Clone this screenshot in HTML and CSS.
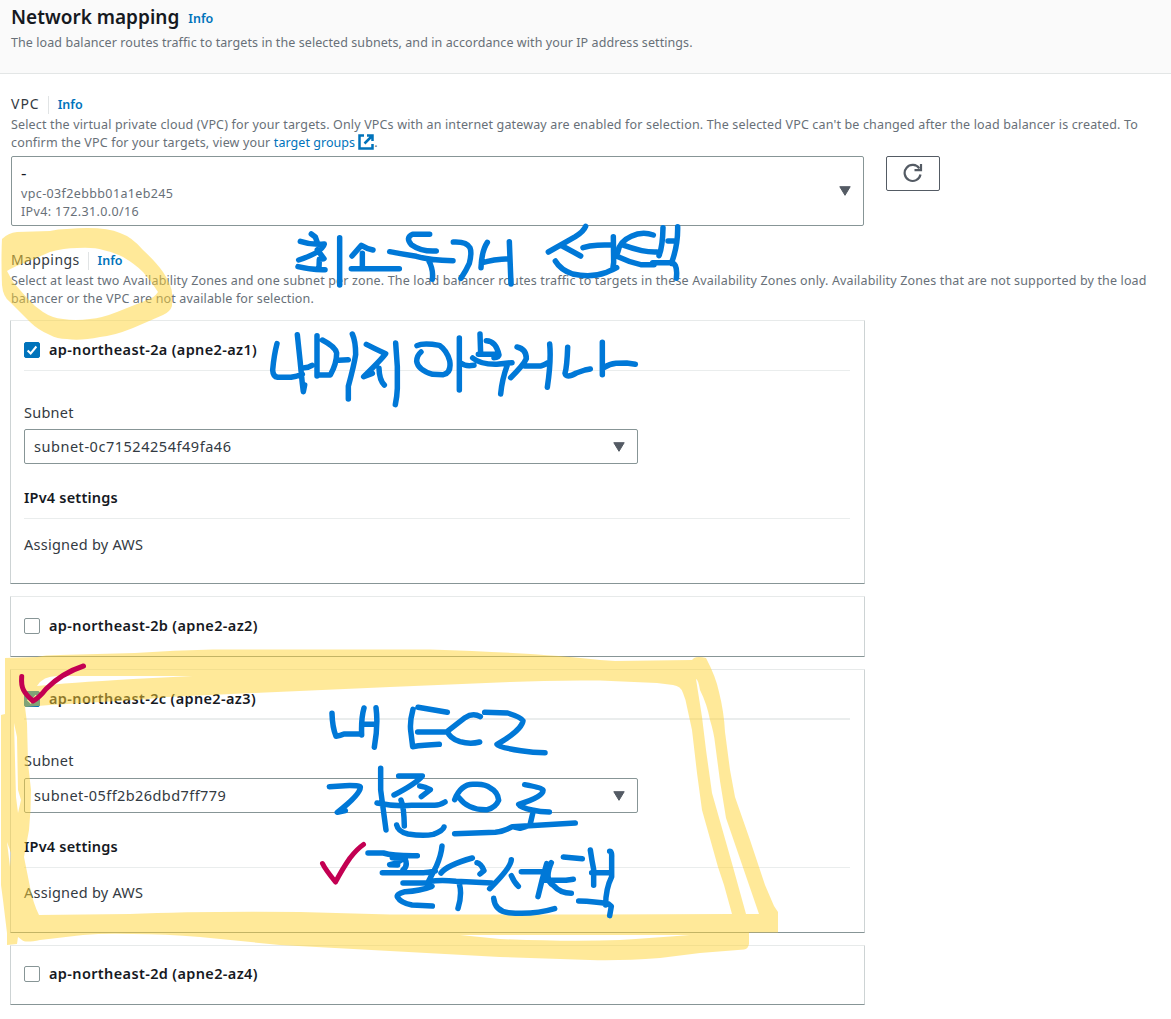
FILE: index.html
```
<!DOCTYPE html>
<html lang="en">
<head>
<meta charset="utf-8">
<title>Network mapping</title>
<link rel="stylesheet" href="styles.css">
</head>
<body>
<main class="page">
  <header class="header">
    <div class="title-row"><h1 class="title">Network mapping</h1><a class="info">Info</a></div>
    <p class="hint hint-header">The load balancer routes traffic to targets in the selected subnets, and in accordance with your IP address settings.</p>
  </header>

  <section class="vpc">
    <div class="label-row"><span class="label vpc-label">VPC</span><a class="info info-divided">Info</a></div>
    <p class="hint"><span class="hint-line">Select the virtual private cloud (VPC) for your targets. Only VPCs with an internet gateway are enabled for selection. The selected VPC can't be changed after the load balancer is created. To</span><span class="hint-line">confirm the VPC for your targets, view your <a class="link">target groups</a><svg class="external" viewBox="0 0 16 16"><path d="M6 1.500H1.500v13h13V10M9 1.500h5.500V7M14 2 6.500 9.500"/></svg>.</span></p>
    <div class="vpc-row">
      <div class="vpc-select">
        <div class="vpc-value"><span class="dash">-</span><span>vpc-03f2ebbb01a1eb245</span><span>IPv4: 172.31.0.0/16</span></div>
        <svg class="caret" viewBox="0 0 12 10"><path d="M.8.7h10.400L6 9.300z"/></svg>
      </div>
      <button class="refresh"><svg viewBox="0 0 20 20"><path d="M17.500 11.500A8 8 0 1 1 16.300 5.500"/><path d="M18 1v6.200h-6.500"/></svg></button>
    </div>
  </section>

  <section class="mappings">
    <div class="label-row"><span class="label mappings-label">Mappings</span><a class="info info-divided">Info</a></div>
    <p class="hint map-hint"><span class="hint-line">Select at least two Availability Zones and one subnet per zone. The load balancer routes traffic to targets in these Availability Zones only. Availability Zones that are not supported by the load</span><span class="hint-line">balancer or the VPC are not available for selection.</span></p>

    <div class="cards">
      <article class="card open">
        <div class="zone"><span class="checkbox checked"><svg viewBox="0 0 16 16"><path d="M3 8.500 6.500 12 13 4"/></svg></span><b>ap-northeast-2a (apne2-az1)</b></div>
        <div class="subnet-label">Subnet</div>
        <div class="subnet-select"><span>subnet-0c71524254f49fa46</span><svg class="caret" viewBox="0 0 12 10"><path d="M.8.7h10.400L6 9.300z"/></svg></div>
        <div class="settings">IPv4 settings</div>
        <div class="assigned">Assigned by AWS</div>
      </article>
      <article class="card"><div class="zone"><span class="checkbox"></span><b>ap-northeast-2b (apne2-az2)</b></div></article>
      <article class="card open third">
        <div class="zone"><span class="checkbox checked"><svg viewBox="0 0 16 16"><path d="M3 8.500 6.500 12 13 4"/></svg></span><b>ap-northeast-2c (apne2-az3)</b></div>
        <div class="subnet-label">Subnet</div>
        <div class="subnet-select"><span>subnet-05ff2b26dbd7ff779</span><svg class="caret" viewBox="0 0 12 10"><path d="M.8.7h10.400L6 9.300z"/></svg></div>
        <div class="settings">IPv4 settings</div>
        <div class="assigned">Assigned by AWS</div>
      </article>
      <article class="card last"><div class="zone"><span class="checkbox"></span><b>ap-northeast-2d (apne2-az4)</b></div></article>
    </div>
  </section>

  <svg class="ink" viewBox="0 0 1171 1019">
    <g class="marker">
      <path d="M2 239Q8 233 17 232L50 231Q58 229 67 229Q104 226 120 233Q132 237 143 250Q156 262 163 272Q173 287 172 296V306Q170 312 163 315L133 328Q113 336 100 337Q80 341 67 339Q57 339 50 335Q38 330 30 322L10 302Q3 297 2 285Q1 260 2 239ZM7 271Q15 266 27 262L50 252Q64 248 77 248Q94 247 103 250Q114 252 123 257Q135 264 143 272Q152 282 158 292Q154 298 147 300L117 312Q102 318 90 319Q75 321 63 319Q52 318 43 312Q34 306 27 298L13 282Z"/>
      <path d="M5 658L37 657Q44 655 60 655L135 653Q175 650 213 649.500H430Q540 653 600 660L615 661L692 660L694 658Q698 656 706 658Q716 677 719 692Q724 712 725 732L730 770L735 797L750 840L765 885L774 906L778 912V932.500H749V944Q748 949 744 949.500L700 953L660 958Q620 961 590 960L500 957L390 951L280 945L200 937Q165 934 133 934Q105 933 83 935L40 940Q25 943 22 940L18 937L17 944L7 945V933L3 900L1 885V715L5 714ZM25 707L50 705L93 702.500Q140 700 167 697L253 693L390 687L510 682Q550 680 600 680.500L657 683L673 685Q681 686 683 693Q686 700 687 707L692 730L697 773L702 810L718 867L724 885L732 914L600 914.500H390L300 912Q200 911 130 914L39 915Q33 903 30 887L24 857L29 830Q31 810 31 790L28 763L27 723ZM37 686Q43 676 57 676H193L133 679Q67 683 37 686ZM14 723L17 737L18 790L21 800L18 813L16 797ZM7 842L11 853L10 867ZM696 679Q698 679 700 690Q707 704 710 720Q714 733 715 743L720 781L726 818L759 914H746L733 867L712 793L706 750L702 717ZM460 935H690Q650 938 620 940Q570 942 500 939Z"/>
    </g>
    <g class="pen">
      <g transform="translate(280 220) scale(.33333)"><path d="M94 42 106 51 112 68M61 64Q96 76 133 72Q128 96 56 120M112 89Q121 102 132 116L118 118 117 142M54 140Q92 150 135 149M179 53V195M216 108 244 76Q260 86 279 90M247 100V145M214 146H358M449 43H398Q375 53 394 74Q425 96 469 93M329 95Q370 103 409 109Q449 121 519 122M445 120Q461 148 457 178M520 66Q560 64 570 83Q576 98 568 130Q559 150 543 175"/></g>
      <g transform="translate(480 215) scale(.33333)"><path d="M22 82Q5 107 3 158M4 144Q40 132 88 131M88 80 93 207M317 34Q311 50 286 65L205 111M247 93 302 123M309 98Q328 92 352 91L396 89M400 65 401 142 399 157M226 138Q242 165 278 177Q333 189 377 173 401 163 410 158M520 60Q486 48 454 64 417 80 413 113M425 89Q459 101 485 107 509 112 531 111M411 124Q446 141 482 149L522 149M549 38Q548 95 537 122M593 35Q594 93 574 145M564 78 581 78M518 143H566Q595 138 589 190"/></g>
      <g transform="translate(260 320) scale(.33333)"><path d="M51 71Q42 105 38 150 39 170 53 172H93Q111 169 127 162M112 44 120 120 127 191 130 215 134 195M133 143Q145 143 156 136M171 47V168M187 60Q226 80 230 99 230 131 211 165H174M236 121 265 119M277 42Q287 64 287 104 282 136 265 199V237M319 73Q338 83 377 101 364 119 311 170L337 160M357 145Q358 180 373 195M407 69 412 140V205Q411 231 406 254"/></g>
      <g transform="translate(410 325) scale(.33333)"><path d="M21 62Q40 52 88 61 110 76 119 107 125 143 100 149L68 148Q24 135 20 109 20 92 33 81M148 39V195M154 115Q165 125 192 121M210 27 212 87M229 47Q258 48 267 90 266 98 252 98M205 88H262M188 99Q212 119 260 118L306 113M292 120Q276 163 272 207M321 66Q349 72 349 101 341 120 302 158M344 123H392Q400 122 414 113M419 57Q424 105 412 187M473 67Q471 124 465 145 468 161 499 144L525 135 541 132M577 52V149M584 127Q598 117 618 115L650 114 676 118"/></g>
      <g transform="translate(310 690) scale(.33333)"><path d="M66 70Q67 111 78 139 91 137 102 132L153 131M162 54Q153 85 155 135M198 53Q205 105 193 172M163 102 199 103M309 58Q299 95 302 121L308 170Q340 165 388 163M324 52 412 67M323 126H408M511 80Q489 67 465 83L412 124Q419 145 450 155 481 164 509 156M524 67 593 69Q634 82 639 92 636 120 561 163 566 172 633 182 669 188 705 188"/><path d="M58 290 105 287Q151 286 151 291 152 312 82 367L106 362M212 235V300L228 420M266 258H337Q318 281 252 315M329 288Q346 290 361 299L334 320M201 339Q255 350 305 346H374Q389 346 405 336M273 330Q282 352 283 408M260 405Q264 425 294 432 340 439 370 433 399 422 402 411M434 329Q453 282 490 283 525 280 541 294 564 306 566 331 557 353 532 359 475 361 448 324M644 284Q695 293 699 300 702 320 626 343 631 353 666 360 691 366 718 366M668 371 660 405M434 431 556 427Q579 425 607 410L796 399M613 411 630 415 660 406"/></g>
      <g transform="translate(310 830) scale(.33333)"><path d="M174 69H220Q250 78 322 77M247 83 280 84Q269 98 239 104L263 105M286 89Q294 108 279 120M217 128H340Q353 128 376 123M396 48Q394 74 379 109L356 153M279 159H351L366 169Q330 183 285 185 256 193 263 202 272 218 306 225L367 228M357 155Q390 149 438 154L545 159M393 129Q411 105 487 84M501 98Q513 100 522 122L510 132M448 161Q457 193 444 235M604 89Q603 113 539 176M604 137Q613 158 625 169M634 125H699M710 101 696 151 684 200M724 98Q701 151 731 167 751 190 784 190M698 151H768L790 148M760 81 817 86M841 60Q846 94 851 118V166M845 128H897M899 64Q906 64 905 82V140Q887 176 887 225M551 205Q555 244 596 248 670 255 734 236M806 213Q855 214 896 222L904 229 899 257"/></g>
    </g>
    <g class="red-pen"><path d="M21.700 676.500Q21 685 23.500 690Q26 695 33 701Q39 698 46 689Q62 673 83.500 666"/><path d="M322.500 863.500Q325 869 335.500 882Q343 868 350 858Q357 849 363.500 844.500"/></g>
  </svg>
</main>
</body>
</html>
```
FILE: styles.css
```
* { box-sizing: border-box; }
body { margin: 0; background: #fff; color: #16191f; font-family: "Noto Sans", "Open Sans", sans-serif; font-size: 14.500px; }
.page { position: relative; width: 1171px; height: 1019px; overflow: hidden; }
.header { height: 74px; padding: 5px 11px 0; background: #fafafa; border-bottom: 1px solid #e3e6e6; }
.title-row { display: flex; align-items: center; gap: 9px; height: 24px; }
.title { margin: 0; font-size: 19px; font-weight: 600; line-height: 24px; white-space: nowrap; }
.title-row .info { padding-top: 3px; }
.info, .link { color: #0073bb; }
.info { font-size: 12.500px; font-weight: 600; line-height: 18px; }
.hint { margin: 0; color: #687078; font-size: 12.500px; line-height: 18px; letter-spacing: .157px; white-space: nowrap; }
.hint-header { margin-top: 5px; letter-spacing: .083px; }
.map-hint { letter-spacing: .15px; }
.hint-line { display: block; }
.vpc { height: 152px; padding: 20px 11px 0; }
.label-row { display: flex; align-items: center; height: 22px; }
.label { height: 22px; font-size: 14px; line-height: 20px; color: #333a42; }
.vpc-label { letter-spacing: 1px; }
.mappings-label { letter-spacing: .4px; }
.info-divided { margin-left: 8px; padding-left: 9px; border-left: 1px solid #e1e4e5; }
.external { width: 16px; height: 16px; margin-left: 3px; vertical-align: -3px; fill: none; stroke: #0073bb; stroke-width: 2.500px; }
.link { letter-spacing: .05px; }
.vpc-row { display: flex; align-items: flex-start; gap: 22px; margin-top: 4px; }
.vpc-select { display: flex; align-items: center; justify-content: space-between; width: 853px; height: 70px; padding: 0 12px 0 9px; border: 1px solid #879596; border-radius: 2px; }
.vpc-value { display: flex; flex-direction: column; padding-top: 3px; color: #687078; font-size: 12.500px; line-height: 18px; letter-spacing: .37px; }
.dash { height: 21px; color: #16191f; font-size: 17px; line-height: 17px; }
.caret { width: 12px; height: 10px; fill: #545b64; stroke: #545b64; stroke-width: 1px; stroke-linejoin: round; }
.refresh { display: flex; justify-content: center; width: 54px; height: 35px; padding: 6px 0 0; border: 1px solid #545b64; border-radius: 2px; background: #fff; }
.refresh svg { width: 20px; height: 20px; fill: none; stroke: #545b64; stroke-width: 2.200px; }
.mappings { padding: 24px 11px 0; }
.cards { display: flex; flex-direction: column; gap: 12px; margin: 12px 0 0 -1px; }
.card { width: 855px; height: 61px; padding: 14px 14px 0 13px; border: 1px solid #cdd3d4; border-top-color: #e7eaea; border-bottom-color: #879596; border-radius: 1px; }
.card.open { height: 264px; }
.zone { display: flex; align-items: center; gap: 9px; height: 30px; color: #16191f; }
.zone b { height: 22px; font-size: 14.500px; font-weight: 600; line-height: 20px; letter-spacing: .36px; }
.open .zone { height: 36px; padding-bottom: 6px; border-bottom: 1px solid #eaeded; }
.checkbox { width: 16px; height: 16px; flex: none; border: 1px solid #879596; border-radius: 2px; background: #fff; }
.checked { border-color: #0073bb; background: #0073bb; }
.checked svg { display: block; width: 14px; height: 14px; fill: none; stroke: #fff; stroke-width: 2.300px; }
.subnet-label { height: 22px; margin-top: 31px; color: #333a42; line-height: 20px; letter-spacing: .25px; }
.subnet-select { display: flex; align-items: center; justify-content: space-between; width: 614px; height: 35px; margin-top: 5px; padding: 0 12px 0 9px; border: 1px solid #879596; border-radius: 2px; color: #333a42; letter-spacing: .53px; }
.subnet-select span { padding-bottom: 2px; }
.third .subnet-select { letter-spacing: .42px; }
.settings { height: 32px; margin-top: 23px; border-bottom: 1px solid #eaeded; line-height: 20px; font-weight: 600; letter-spacing: .2px; }
.assigned { margin-top: 15px; color: #333a42; line-height: 20px; letter-spacing: .25px; }
.third .zone { padding-bottom: 4px; border-bottom-width: 2px; }
.third .subnet-label { margin-top: 30px; }
.third .subnet-select { margin-top: 6px; }
.third .assigned { margin-top: 14px; }
.last { height: 60px; padding-top: 13px; }
.ink { position: absolute; inset: 0; width: 1171px; height: 1019px; pointer-events: none; }
.marker { fill: #ffd333; fill-rule: evenodd; opacity: .5; }
.pen, .red-pen { fill: none; stroke-linecap: round; stroke-linejoin: round; }
.pen { stroke: #0078d7; stroke-width: 16.500px; }
.red-pen { stroke: #c30052; stroke-width: 5px; }
```
